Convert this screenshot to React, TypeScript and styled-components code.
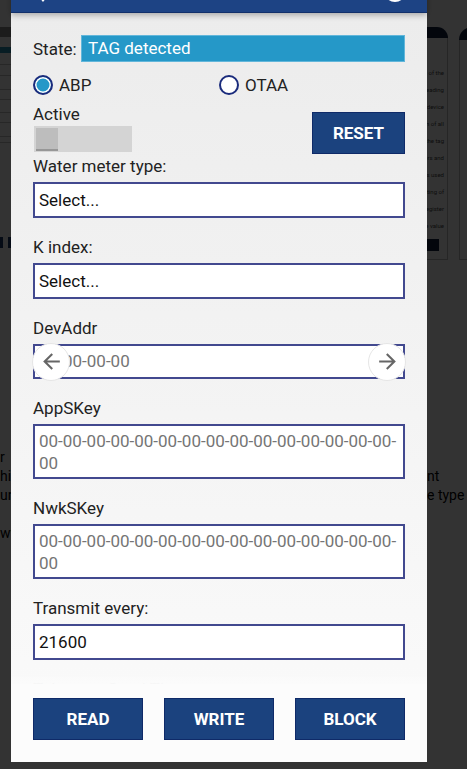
import React from "react";
import styled, { createGlobalStyle } from "styled-components";
import { MdArrowBack, MdArrowForward } from "react-icons/md";

const GlobalStyle = createGlobalStyle`
  html, body { margin: 0; padding: 0; }
  body {
    font-family: Roboto, "Noto Sans", "Liberation Sans", sans-serif;
    background: #fff;
    overflow: hidden;
  }
  * { box-sizing: border-box; }
`;

/* ---------- background page (dimmed) ---------- */
const Page = styled.div`
  width: 467px;
  height: 769px;
  overflow: hidden;
  background: #fff;
  display: flex;
  flex-direction: column;
`;

const PageTop = styled.div`
  display: flex;
  height: 260px;
  padding-top: 27px;
`;

const SideTable = styled.div`
  flex: 0 0 120px;
  display: flex;
  flex-direction: column;
`;

const TableHead = styled.div`
  height: 10px;
  background: #8a8a8a;
`;

const TableBand = styled.div`
  height: 6px;
  margin-top: 10px;
  background: #2a8fb5;
`;

const TableRow = styled.div<{ $h: number }>`
  height: ${(p) => p.$h}px;
  border-bottom: 1px solid #c4c4c4;
`;

const SideButtons = styled.div`
  display: flex;
  gap: 5px;
  margin-top: auto;
  margin-bottom: 12px;
`;

const SideButton = styled.div<{ $w: number }>`
  width: ${(p) => p.$w}px;
  height: 11px;
  background: #1b3a6b;
`;

const Cards = styled.div`
  display: flex;
  gap: 11px;
  margin-left: 178px;
  flex-shrink: 0;
`;

const Card = styled.div`
  flex: 0 0 150px;
  display: flex;
  flex-direction: column;
`;

const CardHead = styled.div`
  height: 13px;
  background: #0f1f3f;
  border-radius: 20px 20px 0 0;
`;

const CardBody = styled.div`
  flex: 1;
  border: 1px solid #bdbdbd;
  border-top: none;
  padding: 31px 3px 8px 10px;
  display: flex;
  flex-direction: column;
  gap: 10px;
`;

const Tiny = styled.div`
  font-size: 6px;
  line-height: 7px;
  color: #444;
  text-align: right;
`;

const CardButton = styled.div`
  height: 12px;
  width: 70px;
  align-self: flex-end;
  margin-right: 5px;
  margin-top: auto;
  background: #0f1f3f;
`;

const TextBlock = styled.div`
  margin-top: 188px;
  display: flex;
  flex-direction: column;
`;

const TextLine = styled.div`
  display: grid;
  grid-template-columns: 427px 1fr;
  font-size: 14px;
  line-height: 19px;
  height: 19px;
  color: #000;
  white-space: nowrap;
`;

const Overlay = styled.div`
  position: fixed;
  inset: 0;
  background: rgba(0, 0, 0, 0.8);
`;

/* ---------- modal ---------- */
const Modal = styled.div`
  position: fixed;
  left: 11px;
  top: -33px;
  width: 416px;
  height: 795px;
  display: flex;
  flex-direction: column;
  background: linear-gradient(#ebebeb, #f3f3f3 50%, #fbfbfb);
`;

const ModalHeader = styled.div`
  flex: 0 0 46px;
  background: #1d4384;
  border-bottom: 1px solid #12306a;
  display: flex;
  align-items: center;
  justify-content: space-between;
  padding: 0 21px 0 20px;
  box-shadow: 0 2px 6px rgba(0, 0, 0, 0.3);
  position: relative;
  z-index: 2;
`;

const PinIcon = styled.svg`
  width: 24px;
  height: 24px;
  margin-top: 4px;
`;

const InfoRing = styled.div`
  width: 22px;
  height: 22px;
  border-radius: 50%;
  border: 2px solid #fff;
  margin-top: 2px;
`;

const Body = styled.div`
  flex: 1;
  overflow: hidden;
  position: relative;
  padding: 22px 22px 0;
  &::after {
    content: "";
    position: absolute;
    left: 0;
    right: 0;
    bottom: 0;
    height: 7px;
    background: linear-gradient(rgba(251, 251, 251, 0.7), #fbfbfb);
  }
`;

const Label = styled.div`
  font-size: 17px;
  line-height: 20px;
  color: #222;
  white-space: nowrap;
`;

const StateRow = styled.div`
  display: flex;
  align-items: center;
  height: 27px;
`;

const StateLabel = styled(Label)`
  flex: 0 0 48px;
`;

const StateBox = styled.div`
  flex: 1;
  height: 27px;
  background: #2598c8;
  border: 1px solid #62b6da;
  color: #fff;
  font-size: 17px;
  line-height: 25px;
  padding-left: 6px;
`;

const RadioRow = styled.div`
  margin-top: 13px;
  display: grid;
  grid-template-columns: 1fr 1fr;
  height: 20px;
`;

const RadioItem = styled.label`
  display: flex;
  align-items: center;
  gap: 6px;
  font-size: 17px;
  line-height: 20px;
  color: #222;
`;

const RadioDot = styled.span<{ $on?: boolean }>`
  width: 20px;
  height: 20px;
  border-radius: 50%;
  border: 2.5px solid #1a2b7c;
  background: ${(p) => (p.$on ? "#2598c8" : "#fff")};
  box-shadow: inset 0 0 0 1.5px #fff;
  flex-shrink: 0;
`;

const ActiveRow = styled.div`
  margin-top: 9px;
  display: flex;
  justify-content: space-between;
  align-items: flex-start;
`;

const ActiveCol = styled.div`
  display: flex;
  flex-direction: column;
`;

const Toggle = styled.div`
  margin-top: 2px;
  margin-left: 1px;
  width: 98px;
  height: 26px;
  background: #d4d4d4;
  padding: 2px;
`;

const Knob = styled.div`
  width: 22px;
  height: 23px;
  background: #bdbdbd;
  border-bottom: 2px solid #979797;
`;

const Button = styled.button<{ $top?: number }>`
  margin-top: ${(p) => p.$top ?? 0}px;
  height: 42px;
  background: #1b427e;
  border: 1px solid #0f2a68;
  color: #fff;
  font-family: Roboto, "Noto Sans", sans-serif;
  font-weight: 700;
  font-size: 17px;
  padding: 0;
  cursor: pointer;
`;

const ResetButton = styled(Button)`
  width: 93px;
`;

const FieldGroup = styled.div<{ $top: number }>`
  margin-top: ${(p) => p.$top}px;
  display: flex;
  flex-direction: column;
  gap: 6px;
`;

const FieldBox = styled.div<{ $h: number; $muted?: boolean; $multi?: boolean; $pl?: number }>`
  position: relative;
  height: ${(p) => p.$h}px;
  background: #fff;
  border: 2px solid #42498f;
  font-size: 17px;
  color: ${(p) => (p.$muted ? "#757575" : "#111")};
  padding: ${(p) => (p.$multi ? "4px 4px 3px" : `0 4px 0 ${p.$pl ?? 4}px`)};
  line-height: ${(p) => (p.$multi ? "22px" : `${p.$h - 4}px`)};
  white-space: ${(p) => (p.$multi ? "normal" : "nowrap")};
`;

const ScrollText = styled.div`
  overflow: hidden;
`;

const ArrowCircle = styled.div<{ $side: "left" | "right" }>`
  position: absolute;
  top: 50%;
  ${(p) => (p.$side === "left" ? "left: -3px;" : "right: -3px;")}
  transform: translateY(-50%);
  width: 38px;
  height: 38px;
  border-radius: 50%;
  background: #fff;
  border: 1px solid #e6e6e6;
  display: flex;
  align-items: center;
  justify-content: center;
  color: #666;
`;

const Footer = styled.div`
  flex: 0 0 78px;
  background: #fcfcfc;
  padding: 14px 22px 22px;
  display: grid;
  grid-template-columns: repeat(3, 1fr);
  gap: 21px;
`;

const Field: React.FC<{ label: string; top: number; children?: React.ReactNode }> = ({
  label,
  top,
  children,
}) => (
  <FieldGroup $top={top}>
    <Label>{label}</Label>
    {children}
  </FieldGroup>
);

const KEY = "00-00-00-00-00-00-00-00-00-00-00-00-00-00-00-00";

export default function App() {
  return (
    <>
      <GlobalStyle />
      <Page>
        <PageTop>
          <SideTable>
            <TableHead />
            <TableBand />
            <TableRow $h={12} />
            <TableRow $h={11} />
            <TableRow $h={14} />
            <TableRow $h={10} />
            <TableRow $h={13} />
            <TableRow $h={10} />
            <TableRow $h={14} />
            <TableRow $h={6} />
            <SideButtons>
              <SideButton $w={3} />
              <SideButton $w={50} />
            </SideButtons>
          </SideTable>
          <Cards>
            <Card>
              <CardHead />
              <CardBody>
                <Tiny>Water meter reading of the</Tiny>
                <Tiny>automatic remote reading</Tiny>
                <Tiny>for each device</Tiny>
                <Tiny>configuration of all</Tiny>
                <Tiny>values in the tag</Tiny>
                <Tiny>parameters and</Tiny>
                <Tiny>is used</Tiny>
                <Tiny>for the setting of</Tiny>
                <Tiny>the register</Tiny>
                <Tiny>to read the value</Tiny>
                <CardButton />
              </CardBody>
            </Card>
            <Card>
              <CardHead />
              <CardBody />
            </Card>
          </Cards>
        </PageTop>
        <TextBlock>
          <TextLine>
            <span>r</span>
            <span />
          </TextLine>
          <TextLine>
            <span>hic</span>
            <span>nt</span>
          </TextLine>
          <TextLine>
            <span>un</span>
            <span>e type</span>
          </TextLine>
          <TextLine>
            <span />
            <span />
          </TextLine>
          <TextLine>
            <span>wv</span>
            <span />
          </TextLine>
        </TextBlock>
      </Page>
      <Overlay />
      <Modal>
        <ModalHeader>
          <PinIcon viewBox="0 0 24 24">
            <path
              d="M12 2C8.1 2 5 5.1 5 9c0 5.2 7 13 7 13s7-7.8 7-13c0-3.9-3.1-7-7-7zm0 9.5a2.5 2.5 0 1 1 0-5 2.5 2.5 0 0 1 0 5z"
              fill="#fff"
            />
          </PinIcon>
          <InfoRing />
        </ModalHeader>
        <Body>
          <StateRow>
            <StateLabel>State:</StateLabel>
            <StateBox>TAG detected</StateBox>
          </StateRow>
          <RadioRow>
            <RadioItem>
              <RadioDot $on />
              ABP
            </RadioItem>
            <RadioItem>
              <RadioDot />
              OTAA
            </RadioItem>
          </RadioRow>
          <ActiveRow>
            <ActiveCol>
              <Label>Active</Label>
              <Toggle>
                <Knob />
              </Toggle>
            </ActiveCol>
            <ResetButton $top={8}>RESET</ResetButton>
          </ActiveRow>
          <Field label="Water meter type:" top={2}>
            <FieldBox $h={36}>Select...</FieldBox>
          </Field>
          <Field label="K index:" top={19}>
            <FieldBox $h={36}>Select...</FieldBox>
          </Field>
          <Field label="DevAddr" top={19}>
            <FieldBox $h={35} $muted $pl={28}>
              <ScrollText>00-00-00</ScrollText>
              <ArrowCircle $side="left">
                <MdArrowBack size={25} />
              </ArrowCircle>
              <ArrowCircle $side="right">
                <MdArrowForward size={25} />
              </ArrowCircle>
            </FieldBox>
          </Field>
          <Field label="AppSKey" top={19}>
            <FieldBox $h={55} $muted $multi>
              {KEY}
            </FieldBox>
          </Field>
          <Field label="NwkSKey" top={19}>
            <FieldBox $h={55} $muted $multi>
              {KEY}
            </FieldBox>
          </Field>
          <Field label="Transmit every:" top={19}>
            <FieldBox $h={36}>21600</FieldBox>
          </Field>
          <Field label="Telegram Send Time:" top={19} />
        </Body>
        <Footer>
          <Button>READ</Button>
          <Button>WRITE</Button>
          <Button>BLOCK</Button>
        </Footer>
      </Modal>
    </>
  );
}
